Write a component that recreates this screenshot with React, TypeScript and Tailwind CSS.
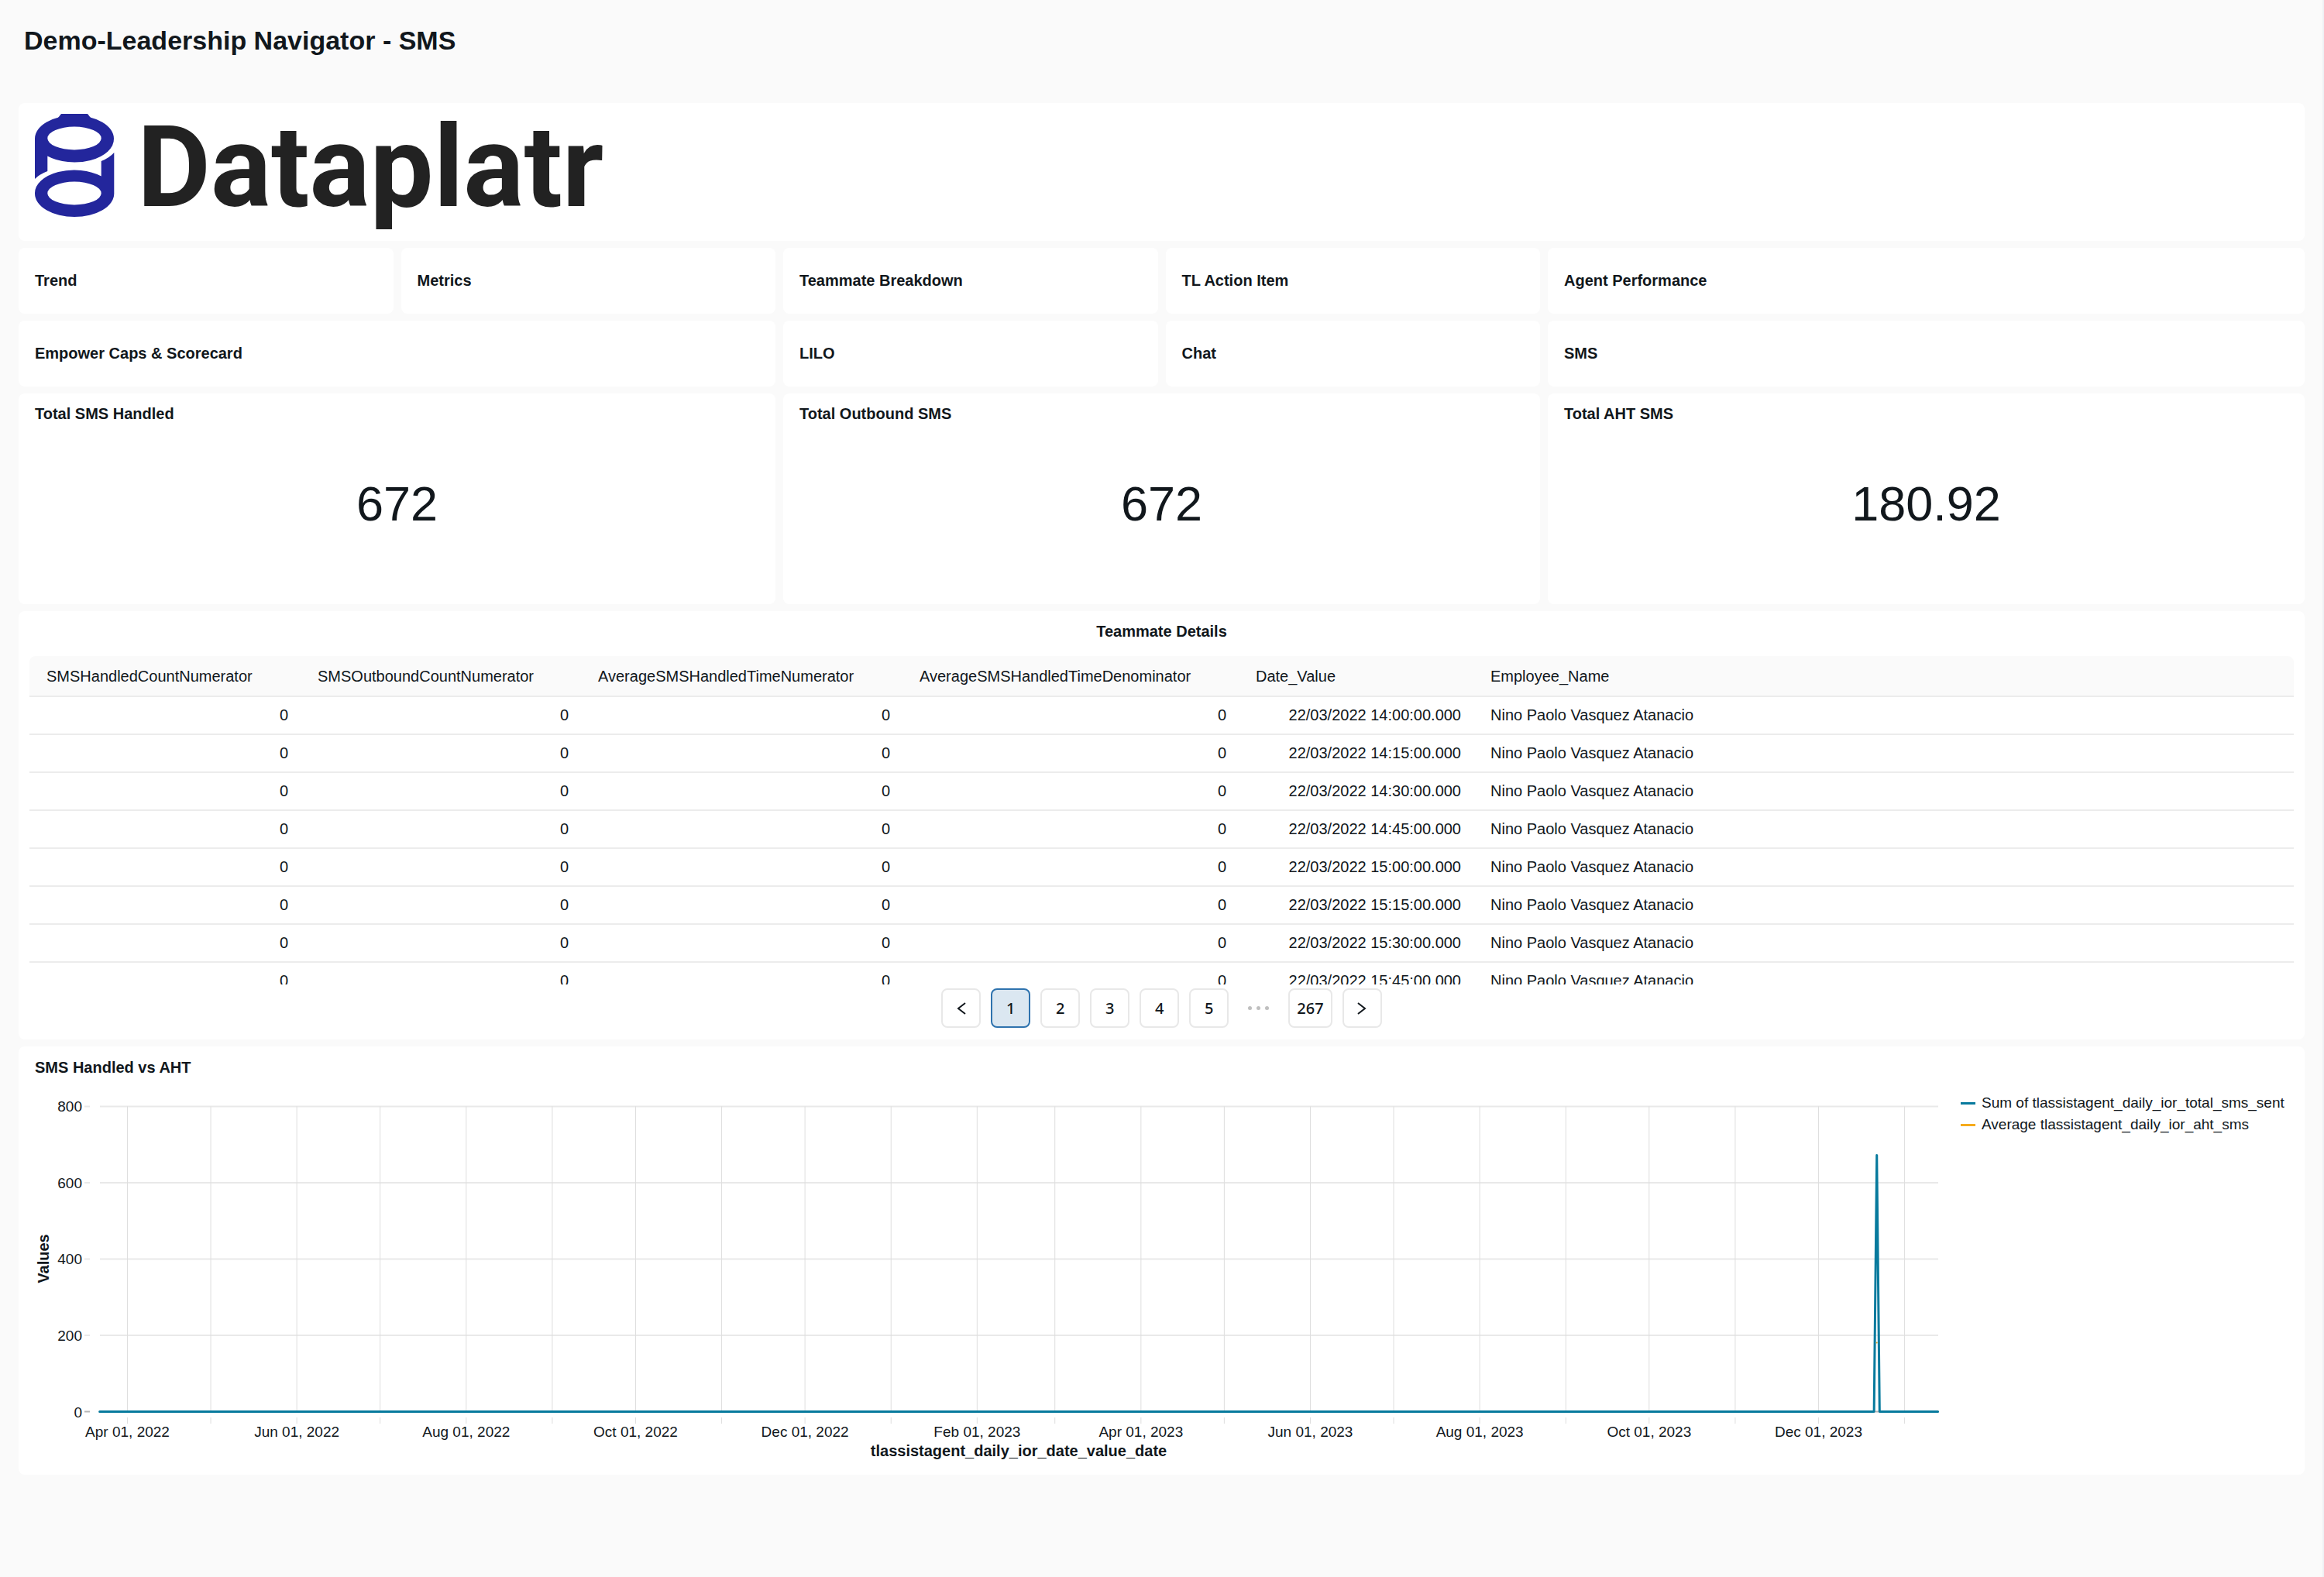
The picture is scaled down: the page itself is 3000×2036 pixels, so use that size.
import React from "react";

type CardProps = { className?: string; children: React.ReactNode };

function Card({ className = "", children }: CardProps) {
  return <section className={`rounded-lg bg-white ${className}`}>{children}</section>;
}

function NavTile({ label, wide = false }: { label: string; wide?: boolean }) {
  return (
    <Card className={`flex h-[85px] items-center px-[21px] pb-[2px] ${wide ? "col-span-2" : ""}`}>
      <h2 className="text-[20px] leading-6 font-bold">{label}</h2>
    </Card>
  );
}

function Counter({ title, value }: { title: string; value: string }) {
  return (
    <Card className="col-span-2 flex h-[272px] flex-col px-[21px] pt-[14px]">
      <h2 className="text-[20px] leading-6 font-bold">{title}</h2>
      <p className="pt-[68px] text-center text-[63px] leading-[72px]">{value}</p>
    </Card>
  );
}

function Logo() {
  return (
    <div className="flex h-[150px] gap-[29px] overflow-hidden">
      <svg viewBox="0 0 103 150" className="h-[150px] w-[103px] shrink-0" fill="#23269c" aria-hidden="true">
        <path d="M34 0H68L72 5H30Z" />
        <path
          fillRule="evenodd"
          d="M0 32A51 30 0 0 1 102 32A51 30 0 0 1 16.300 54.500V74Q6 78 0 84ZM16.300 31.500A34.700 15 0 0 0 85.700 31.500A34.700 15 0 0 0 16.300 31.500Z"
        />
        <path
          fillRule="evenodd"
          d="M102.300 50V103A51 30 0 0 1 0 103A51 30 0 0 1 85.700 80.500V61Q96 57 102.300 50ZM16.300 102.500A34.700 15 0 0 0 85.700 102.500A34.700 15 0 0 0 16.300 102.500Z"
        />
      </svg>
      <span className="font-['Roboto',sans-serif] text-[146px] leading-[140px] font-bold text-[#222222]">
        Dataplatr
      </span>
    </div>
  );
}

const times = ["14:00", "14:15", "14:30", "14:45", "15:00", "15:15", "15:30", "15:45"];

const columns = [
  { name: "SMSHandledCountNumerator", head: "w-[353px] pr-[19px] pl-[22px]" },
  { name: "SMSOutboundCountNumerator", head: "w-[362px] px-[19px]" },
  { name: "AverageSMSHandledTimeNumerator", head: "w-[415px] px-[19px]" },
  { name: "AverageSMSHandledTimeDenominator", head: "w-[434px] px-[19px]" },
  { name: "Date_Value", head: "w-[303px] px-[19px]" },
  { name: "Employee_Name", head: "px-[19px]" },
];

function TeammateTable() {
  return (
    <div className="h-[424px] overflow-hidden">
      <table className="w-full table-fixed border-separate border-spacing-0 text-[20px] leading-6">
        <thead>
          <tr className="h-[53px]">
            {columns.map((c) => (
              <th
                key={c.name}
                scope="col"
                className={`border-b-2 border-[#ececec] bg-[#fafafa] text-left font-normal first:rounded-tl-lg last:rounded-tr-lg ${c.head}`}
              >
                {c.name}
              </th>
            ))}
          </tr>
        </thead>
        <tbody>
          {times.map((t) => (
            <tr key={t} className="h-[49px]">
              {[0, 1, 2, 3].map((i) => (
                <td key={i} className="border-b-2 border-[#ececec] px-[19px] pb-[2px] text-right">
                  0
                </td>
              ))}
              <td className="border-b-2 border-[#ececec] px-[19px] pb-[2px] text-right whitespace-nowrap">
                22/03/2022 {t}:00.000
              </td>
              <td className="border-b-2 border-[#ececec] px-[19px] pb-[2px]">Nino Paolo Vasquez Atanacio</td>
            </tr>
          ))}
        </tbody>
      </table>
    </div>
  );
}

function PageButton({ label, current = false, children }: { label: string; current?: boolean; children: React.ReactNode }) {
  return (
    <button
      type="button"
      aria-label={label}
      aria-current={current ? "page" : undefined}
      className={`flex h-[51px] min-w-[51px] items-center justify-center rounded-lg border-2 px-[9px] ${
        current ? "border-[#2f73ae] bg-[#dbe7f1]" : "border-[#e8e8e8] bg-white"
      }`}
    >
      {children}
    </button>
  );
}

function Pagination() {
  return (
    <nav
      aria-label="Pagination"
      className="mt-[5px] flex justify-center gap-[13px] font-['Noto_Sans',sans-serif] text-[20px] leading-6 font-medium"
    >
      <PageButton label="Previous page">
        <svg viewBox="0 0 12 18" className="h-[18px] w-3" fill="none" stroke="#11171c" strokeWidth="2">
          <path d="M11 2L2 9L11 16" />
        </svg>
      </PageButton>
      {["1", "2", "3", "4", "5"].map((n) => (
        <PageButton key={n} label={`Page ${n}`} current={n === "1"}>
          {n}
        </PageButton>
      ))}
      <span className="flex w-[51px] items-center justify-center gap-[6px]" aria-hidden="true">
        <i className="size-[5px] rounded-full bg-[#bfbfbf]" />
        <i className="size-[5px] rounded-full bg-[#bfbfbf]" />
        <i className="size-[5px] rounded-full bg-[#bfbfbf]" />
      </span>
      <PageButton label="Page 267">267</PageButton>
      <PageButton label="Next page">
        <svg viewBox="0 0 12 18" className="h-[18px] w-3" fill="none" stroke="#11171c" strokeWidth="2">
          <path d="M1 2L10 9L1 16" />
        </svg>
      </PageButton>
    </nav>
  );
}

const DAY = 86400000;
const FIRST = Date.UTC(2022, 3, 1);
const PEAK_DAY = Date.UTC(2023, 11, 22);
const MONTHS = ["Jan", "Feb", "Mar", "Apr", "May", "Jun", "Jul", "Aug", "Sep", "Oct", "Nov", "Dec"];
const dateX = (time: number) => 140.5 + ((time - FIRST) / DAY) * 3.5845;
const valueY = (v: number) => 432.5 - v * 0.4926;

const monthMarks = Array.from({ length: 22 }, (_, i) => {
  const d = new Date(Date.UTC(2022, 3 + i, 1));
  return {
    x: dateX(d.getTime()),
    label: i % 2 === 0 && i < 21 ? `${MONTHS[d.getUTCMonth()]} 01, ${d.getUTCFullYear()}` : null,
  };
});

const smsSent: [number, number][] = [
  [Date.UTC(2022, 2, 22), 0],
  [PEAK_DAY - DAY, 0],
  [PEAK_DAY, 672],
  [PEAK_DAY + DAY, 0],
  [Date.UTC(2024, 0, 13), 0],
];

function LineChart() {
  const left = 105;
  const right = 2478;
  return (
    <svg
      viewBox="0 0 2507 514"
      className="h-auto min-w-0 flex-1"
      fontFamily="'Liberation Sans', Arial, sans-serif"
      fontSize="19"
      fill="#11171c"
      role="img"
      aria-label="SMS Handled vs AHT"
    >
      {[0, 200, 400, 600, 800].map((v) => (
        <g key={v}>
          <path
            d={`M85 ${valueY(v)}H92M${left} ${valueY(v)}H${right}`}
            stroke={v === 0 ? "#b5b5b5" : "#e9e9e9"}
            strokeWidth="2"
          />
          <text x="82" y={valueY(v) + 7} textAnchor="end">
            {v}
          </text>
        </g>
      ))}
      {monthMarks.map((m) => (
        <g key={m.x}>
          <path d={`M${m.x} ${valueY(800)}V${valueY(0)}M${m.x} 440V448`} stroke="#dedede" strokeWidth="1" />
          {m.label && (
            <text x={m.x} y="465" textAnchor="middle">
              {m.label}
            </text>
          )}
        </g>
      ))}
      <polyline
        points={smsSent.map(([t, v]) => `${dateX(t)},${valueY(v)}`).join(" ")}
        fill="none"
        stroke="#077a9d"
        strokeWidth="3"
        strokeLinejoin="round"
        strokeLinecap="round"
      />
      <circle cx={dateX(PEAK_DAY)} cy={valueY(180.92)} r="1" fill="#d9a21f" />
      <g fontSize="20" fontWeight="700" textAnchor="middle">
        <text x="1291" y="490">
          tlassistagent_daily_ior_date_value_date
        </text>
        <text transform="translate(39 235) rotate(-90)">Values</text>
      </g>
    </svg>
  );
}

function Legend() {
  return (
    <ul className="w-[444px] shrink-0 pt-5 text-[19px] leading-7">
      <li className="flex items-center gap-2">
        <span className="h-[3px] w-[19px] bg-[#077a9d]" />
        Sum of tlassistagent_daily_ior_total_sms_sent
      </li>
      <li className="flex items-center gap-2">
        <span className="h-[3px] w-[19px] bg-[#f6ab1c]" />
        Average tlassistagent_daily_ior_aht_sms
      </li>
    </ul>
  );
}

export default function App() {
  return (
    <div className="min-h-screen border-r-2 border-[#eff1f5] bg-[#fafafa] pr-[23px] pl-6 font-['Liberation_Sans',Arial,sans-serif] text-[#11171c]">
      <header className="h-[133px] pt-8 pl-[7px]">
        <h1 className="text-[34px] leading-10 font-bold">Demo-Leadership Navigator - SMS</h1>
      </header>
      <main className="grid grid-cols-6 gap-x-[10px] gap-y-[9px]">
        <Card className="col-span-6 h-[178px] px-[21px] py-[14px]">
          <Logo />
        </Card>

        <NavTile label="Trend" />
        <NavTile label="Metrics" />
        <NavTile label="Teammate Breakdown" />
        <NavTile label="TL Action Item" />
        <NavTile label="Agent Performance" wide />
        <NavTile label="Empower Caps & Scorecard" wide />
        <NavTile label="LILO" />
        <NavTile label="Chat" />
        <NavTile label="SMS" wide />

        <Counter title="Total SMS Handled" value="672" />
        <Counter title="Total Outbound SMS" value="672" />
        <Counter title="Total AHT SMS" value="180.92" />

        <Card className="col-span-6 h-[553px] px-[14px] pt-[14px]">
          <h2 className="mb-5 text-center text-[20px] leading-6 font-bold">Teammate Details</h2>
          <TeammateTable />
          <Pagination />
        </Card>

        <Card className="col-span-6 pt-[15px]">
          <h2 className="px-[21px] text-[20px] leading-6 font-bold">SMS Handled vs AHT</h2>
          <div className="flex items-start">
            <LineChart />
            <Legend />
          </div>
        </Card>
      </main>
    </div>
  );
}
